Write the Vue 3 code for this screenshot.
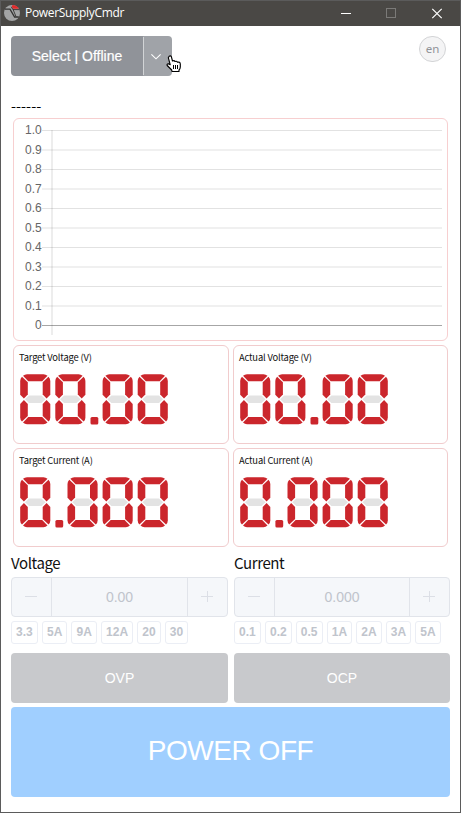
<script setup>
const ticks = ['1.0', '0.9', '0.8', '0.7', '0.6', '0.5', '0.4', '0.3', '0.2', '0.1', '0']
const tickY = (i) => 11 + i * 19.5
const lineY = (i) => (i % 2 ? Math.floor(tickY(i)) : Math.round(tickY(i)))

const layout = (value) => {
  let x = 0
  return [...value].map((char) => {
    const cell = { char, x }
    x += char === '.' ? 12.2 : 35.1
    return cell
  })
}
const meters = [
  { label: 'Target Voltage (V)', cells: layout('00.00') },
  { label: 'Actual Voltage (V)', cells: layout('00.00') },
  { label: 'Target Current (A)', cells: layout('0.000') },
  { label: 'Actual Current (A)', cells: layout('0.000') },
]
const controls = [
  { title: 'Voltage', value: '0.00', presets: ['3.3', '5A', '9A', '12A', '20', '30'], protect: 'OVP' },
  { title: 'Current', value: '0.000', presets: ['0.1', '0.2', '0.5', '1A', '2A', '3A', '5A'], protect: 'OCP' },
]
</script>

<template>
  <div class="window">
    <header class="titlebar">
      <svg class="logo" width="16" height="16" viewBox="0 0 16 16">
        <circle cx="8" cy="8" r="8" fill="#a3a4a5" />
        <path d="M7.6 1.6 L8.6 .1 Q12.5 .2 14.9 3.8 L9 3.8 Z" fill="#e32b2b" />
        <path d="M.8 4.2 H6 L10.6 12 H14.8" fill="none" stroke="#343332" stroke-width="1.3" />
        <path d="M7.2 1.8 L9 4.6 H15.3 M9 4.3 L12 11.6" fill="none" stroke="#343332" stroke-width=".9" />
      </svg>
      <span class="name">PowerSupplyCmdr</span>
      <svg class="winbtns" width="106" height="12" viewBox="0 0 106 12">
        <path d="M0 5.5 H10" stroke="#fff" />
        <rect x="45.5" y=".5" width="9" height="9" fill="none" stroke="#7b7a78" />
        <path d="M91.3 .8 L100.7 10.2 M100.7 .8 L91.3 10.2" stroke="#fff" stroke-width="1.2" />
      </svg>
    </header>

    <main class="content">
      <div class="top">
        <div class="select">
          <button class="device">Select | Offline</button>
          <button class="arrow">
            <svg width="12" height="12" viewBox="0 0 12 12"><path d="M1.4 4.3 L6 8.8 L10.6 4.3" fill="none" stroke="#fff" stroke-width="1.1" /></svg>
          </button>
          <svg class="pointer" width="16" height="18" viewBox="0 0 16 18">
            <path d="M3.2 1.2 Q4.7 .2 5.4 1.8 L6.5 6 Q8.3 5.2 9 6.5 Q10.7 5.7 11.5 7.2 Q14 6.6 14.3 9 V12 Q14.2 14 13 15 V16.5 H6 L5.7 15 L1.2 10.5 Q.6 8.8 2.3 8.7 L4.2 9.7 L2.3 2.7 Z" fill="#fff" stroke="#000" stroke-width="1.15" stroke-linejoin="round" />
            <path d="M7.5 10 V14 M9.5 10 V14 M11.5 10 V14" stroke="#000" fill="none" />
          </svg>
        </div>
        <button class="lang">en</button>
      </div>

      <div class="status">------</div>

      <section class="chart">
        <svg width="432" height="221" viewBox="0 0 432 221">
          <g v-for="(t, i) in ticks" :key="t">
            <rect x="28" :y="lineY(i)" width="400" :height="i % 2 ? 2 : 1" :fill="i === 10 ? '#a6a6a6' : i % 2 ? '#f0f0f0' : '#e2e2e2'" />
            <text x="27.7" :y="tickY(i) + 4" text-anchor="end">{{ t }}</text>
          </g>
          <rect x="37" y="11" width="2" height="205" fill="#000" fill-opacity=".07" />
        </svg>
      </section>

      <section class="meters">
        <div v-for="m in meters" :key="m.label" class="meter">
          <div class="label">{{ m.label }}</div>
          <svg width="152" height="52" viewBox="0 0 152 52">
            <g v-for="c in m.cells" :key="c.x" :transform="`translate(${c.x} 0)`">
              <rect v-if="c.char === '.'" x=".3" y="43" width="7.8" height="7.5" rx="1.5" fill="#cb262c" />
              <template v-else>
                <path d="M5 25.3 L9 21.6 H21.5 L25.6 25.3 L21.5 29 H9 Z" fill="#e3e3e3" />
                <g fill="#cb262c">
                  <path d="M3 1.8 Q4.8 .2 7 .2 H23.5 Q25.7 .2 27.5 1.8 L22.2 7.3 H8.3 Z" />
                  <path d="M2 2.8 L7.8 8.3 V20.6 L3.9 24.5 L.2 20.7 V7 Q.2 4.5 2 2.8 Z" />
                  <path d="M28.5 2.8 L22.7 8.3 V20.6 L26.6 24.5 L30.3 20.7 V7 Q30.3 4.5 28.5 2.8 Z" />
                  <path d="M2 47.6 L7.8 42.1 V30 L3.9 26.1 L.2 29.9 V43.4 Q.2 45.9 2 47.6 Z" />
                  <path d="M28.5 47.6 L22.7 42.1 V30 L26.6 26.1 L30.3 29.9 V43.4 Q30.3 45.9 28.5 47.6 Z" />
                  <path d="M3 48.6 Q4.8 50.2 7 50.2 H23.5 Q25.7 50.2 27.5 48.6 L22.2 43.1 H8.3 Z" />
                </g>
              </template>
            </g>
          </svg>
        </div>
      </section>

      <section class="controls">
        <div v-for="c in controls" :key="c.title" class="control">
          <div class="title">{{ c.title }}</div>
          <div class="number">
            <button class="step"><svg width="14" height="14" viewBox="0 0 14 14"><path d="M1 6.5 H13" stroke="#dcdfe6" /></svg></button>
            <div class="value">{{ c.value }}</div>
            <button class="step"><svg width="14" height="14" viewBox="0 0 14 14"><path d="M1 6.5 H13 M7.5 1 V12" stroke="#dcdfe6" /></svg></button>
          </div>
          <div class="presets">
            <button v-for="p in c.presets" :key="p" class="preset">{{ p }}</button>
          </div>
          <button class="protect">{{ c.protect }}</button>
        </div>
      </section>

      <button class="power">POWER OFF</button>
    </main>
  </div>
</template>

<style>
body { margin: 0; }
</style>

<style scoped>
* { box-sizing: border-box; }
button { margin: 0; padding: 0; border: 0; background: none; font-family: "Liberation Sans", Arial, sans-serif; }
svg { display: block; flex: none; }
.window { width: 461px; height: 813px; overflow: hidden; background: #fff; border: 1px solid #5b5b5b; font-family: "Noto Sans CJK SC", sans-serif; color: #000; }
.titlebar { height: 25px; background: #4a4845; display: flex; align-items: center; padding-left: 3px; }
.logo { margin-bottom: 1px; }
.name { flex: 1; margin: 0 0 1px 5px; color: #fff; font: 12px/18px "Open Sans", sans-serif; letter-spacing: -.33px; }
.winbtns { margin-right: 13px; }
.content { padding: 10px; display: flex; flex-direction: column; }
.top { display: flex; justify-content: space-between; align-items: flex-start; height: 40px; padding-right: 4px; }
.select { position: relative; display: flex; width: 161px; height: 40px; }
.device { width: 132px; background: #909399; color: #fff; font-size: 14px; border-radius: 4px 0 0 4px; -webkit-text-stroke: .2px #fff; }
.arrow { flex: 1; background: linear-gradient(#d2d4d6, #d2d4d6) 0 50% / 1px 38px no-repeat #a0a3a8; border-radius: 0 4px 4px 0; display: flex; align-items: center; justify-content: center; padding-right: 3px; }
.pointer { position: absolute; left: 155px; top: 19px; }
.lang { width: 27px; height: 26px; border: 1px solid #d3d4d6; border-radius: 14px; background: #f4f4f5; color: #909399; font: 11.5px/22px "Noto Sans", sans-serif; }
.status { height: 24px; margin-top: 18px; font-size: 14.5px; line-height: 24px; }
.chart { margin: 0 2px 0 2px; height: 223px; border: 1px solid #f7cfd0; border-radius: 6px; }
.chart text { font: 12px "Liberation Sans", sans-serif; fill: #666; }
.meters { display: grid; grid-template-columns: 216px 215px; grid-auto-rows: 99px; gap: 4px; margin: 4px 1px 0 2px; }
.meter { border: 1px solid #f1cccd; border-radius: 6px; padding: 4px 5px 0; }
.meter .label { font-size: 9.4px; line-height: 14px; margin-bottom: 10px; letter-spacing: -.18px; color: #111; }
.meter svg { margin-left: 1px; }
.controls { display: grid; grid-template-columns: 217px 216px; gap: 6px; margin-top: 5px; }
.control { display: flex; flex-direction: column; }
.title { font-size: 15px; line-height: 22px; height: 25px; letter-spacing: -.4px; color: #111; }
.number { height: 40px; display: flex; border: 1px solid #e1e4ea; border-radius: 4px; background: #f5f7fa; }
.step { width: 39px; display: flex; align-items: center; justify-content: center; padding-right: 1px; }
.value { flex: 1; border: solid #e1e4ea; border-width: 0 1px; color: #c0c4cc; font: 14px/39px "Liberation Sans", sans-serif; text-align: center; }
.presets { display: flex; gap: 4px; margin-top: 4px; height: 23px; }
.preset { border: 1px solid #ebeef5; border-radius: 3px; padding: 0 4.1px; color: #c0c4cc; font-size: 12px; line-height: 19px; font-weight: bold; }
.protect { height: 50px; margin-top: 9px; border-radius: 4px; background: #c8c9cc; color: #fff; font-size: 14px; }
.power { height: 90px; margin-top: 4px; border-radius: 4px; background: #a0cfff; color: #fff; font-size: 28px; letter-spacing: -.45px; padding-bottom: 2px; }
</style>
